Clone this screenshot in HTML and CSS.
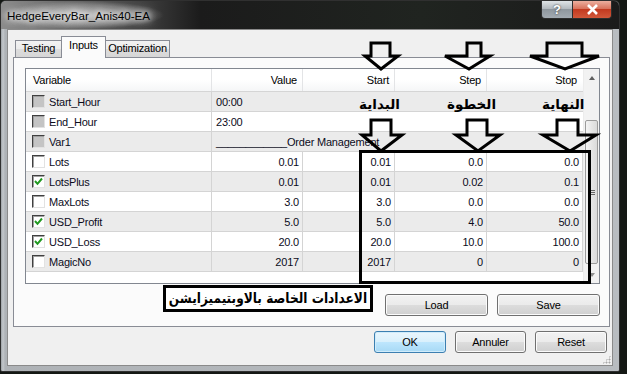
FILE: index.html
```html
<!doctype html>
<html lang="fr">
	<head>
		<meta charset="UTF-8" />
		<title>HedgeEveryBar_Anis40-EA</title>
		<link rel="stylesheet" href="styles.css">
	</head>
	<body>
		<div class="window">
			<div class="titlebar">
				<span class="title">HedgeEveryBar_Anis40-EA</span>
				<div class="caption-buttons">
					<span class="cap-btn help">?</span>
					<span class="cap-btn close">
						<svg width="13" height="11" viewBox="0 0 13 11">
							<path d="M2 1 L11 10 M11 1 L2 10" stroke="#fff" stroke-width="2.6" fill="none" />
						</svg>
					</span>
				</div>
			</div>

			<div class="client">
				<div class="tabs">
					<span class="tab">Testing</span>
					<span class="tab active">Inputs</span>
					<span class="tab">Optimization</span>
				</div>

				<div class="panel">
					<div class="list">
						<div class="rows">
							<div class="row head">
								<div class="cell name">Variable</div>
								<div class="cell">Value</div>
								<div class="cell">Start</div>
								<div class="cell">Step</div>
								<div class="cell">Stop</div>
							</div>
							<div class="row alt">
								<div class="cell name"><span class="check off"></span>Start_Hour</div>
								<div class="cell wide">00:00</div>
							</div>
							<div class="row">
								<div class="cell name"><span class="check off"></span>End_Hour</div>
								<div class="cell wide">23:00</div>
							</div>
							<div class="row alt">
								<div class="cell name"><span class="check off"></span>Var1</div>
								<div class="cell wide">____________Order Management</div>
							</div>
							<div class="row">
								<div class="cell name"><span class="check"></span>Lots</div>
								<div class="cell">0.01</div>
								<div class="cell">0.01</div>
								<div class="cell">0.0</div>
								<div class="cell">0.0</div>
							</div>
							<div class="row alt">
								<div class="cell name"><span class="check on"></span>LotsPlus</div>
								<div class="cell">0.01</div>
								<div class="cell">0.01</div>
								<div class="cell">0.02</div>
								<div class="cell">0.1</div>
							</div>
							<div class="row">
								<div class="cell name"><span class="check"></span>MaxLots</div>
								<div class="cell">3.0</div>
								<div class="cell">3.0</div>
								<div class="cell">0.0</div>
								<div class="cell">0.0</div>
							</div>
							<div class="row alt">
								<div class="cell name"><span class="check on"></span>USD_Profit</div>
								<div class="cell">5.0</div>
								<div class="cell">5.0</div>
								<div class="cell">4.0</div>
								<div class="cell">50.0</div>
							</div>
							<div class="row">
								<div class="cell name"><span class="check on"></span>USD_Loss</div>
								<div class="cell">20.0</div>
								<div class="cell">20.0</div>
								<div class="cell">10.0</div>
								<div class="cell">100.0</div>
							</div>
							<div class="row alt">
								<div class="cell name"><span class="check"></span>MagicNo</div>
								<div class="cell">2017</div>
								<div class="cell">2017</div>
								<div class="cell">0</div>
								<div class="cell">0</div>
							</div>
						</div>

						<div class="scrollbar">
							<span class="sb-btn"><span class="arrow-up"></span></span>
							<div class="track">
								<div class="thumb"><span class="grip-lines"></span></div>
							</div>
							<span class="sb-btn"><span class="arrow-down"></span></span>
						</div>
					</div>

					<div class="file-buttons">
						<button>Load</button>
						<button>Save</button>
					</div>
				</div>

				<div class="dialog-buttons">
					<button class="default">OK</button>
					<button>Annuler</button>
					<button>Reset</button>
				</div>
				<span class="size-grip"></span>
			</div>
		</div>

		<!-- annotations drawn over the dialog -->
		<div class="notes">
			<svg class="marks" width="627" height="374" viewBox="0 0 627 374">
				<g fill="none" stroke="#000" stroke-width="3" stroke-linejoin="miter">
					<polygon points="371,43 390,43 390,56 398,56 381,69 365,56 371,56" />
					<polygon points="467,43 481,43 481,56 490,56 469,69 445,56 467,56" />
					<polygon points="547,43 582,43 582,56 599,56 565,69 530,56 547,56" />
					<polygon points="371,120 391,120 391,135 402,135 381,151 362,135 371,135" />
					<polygon points="467,120 487,120 487,135 500,135 478,151 456,135 467,135" />
					<polygon points="557,120 578,120 578,135 596,135 570,151 543,135 557,135" />
					<rect x="360.5" y="151.5" width="229" height="131" />
				</g>
			</svg>
			<span class="note-label start">البداية</span>
			<span class="note-label step">الخطوة</span>
			<span class="note-label stop">النهاية</span>
			<div class="note-box"><span>الاعدادات الخاصة بالاوبتيميزايشن</span></div>
		</div>
	</body>
</html>
```

FILE: styles.css
```css
body {
	margin: 0;
	width: 627px;
	height: 374px;
	overflow: hidden;
	position: relative;
	background-color: #141814;
	font-family: "Liberation Sans", Arial, sans-serif;
	font-size: 11px;
	color: #000;
}
.window {
	width: 620px;
	height: 372px;
	box-sizing: border-box;
	border: 1px solid #303030;
	border-radius: 6px 6px 2px 2px;
	background: linear-gradient(90deg, #9da2a6, #c4c8cc 2px, #aeb2b6 4px, #b8bcc0 100%);
	display: flex;
	flex-direction: column;
	overflow: hidden;
}

/* title bar */
.titlebar {
	height: 28px;
	flex: none;
	display: flex;
	justify-content: space-between;
	background: linear-gradient(90deg, #8b8b8b 0, #6c6c6c 60px, #3a3a3a 150px, #1b1b1b 200px, #202420 420px, #1b1b1b 100%);
}
.title {
	padding: 8px 14px 0 6px;
	font-size: 11.6px;
	background: radial-gradient(closest-side, rgba(225, 225, 225, 0.75), rgba(200, 200, 200, 0.35) 70%, rgba(200, 200, 200, 0));
	text-shadow: 0 0 6px #fff, 0 0 10px #fff, 0 0 14px rgba(255, 255, 255, 0.8);
}
.caption-buttons {
	display: flex;
	margin-right: 7px;
	height: 18px;
}
.cap-btn {
	display: flex;
	align-items: center;
	justify-content: center;
	border: 1px solid #2e2e2e;
	border-top: none;
}
.help {
	width: 30px;
	border-radius: 0 0 0 4px;
	background: linear-gradient(#dfe3e6, #b4babf 45%, #8f979e 50%, #a3abb2);
	color: #fff;
	font-weight: bold;
	font-size: 13px;
	text-shadow: 0 0 2px #222;
}
.close {
	width: 38px;
	border-left: none;
	border-radius: 0 0 4px 0;
	background: linear-gradient(#ecaf9f, #d8735d 45%, #c23a20 50%, #d2583a);
}

/* client area */
.client {
	flex: 1;
	margin: 0 6px 5px;
	padding: 7px 2px 0 5px;
	border: 1px solid #8a8a8a;
	background-color: #f0f0f0;
	position: relative;
}
.tabs {
	display: flex;
	align-items: flex-end;
	height: 21px;
	padding-left: 2px;
	margin-bottom: -1px;
	position: relative;
	z-index: 1;
}
.tab {
	height: 15px;
	margin-bottom: 1px;
	padding-top: 1px;
	text-align: center;
	border: 1px solid #898c95;
	border-bottom: none;
	background: linear-gradient(#f2f2f2, #ebebeb 50%, #dddddd 50%, #d6d6d6);
	letter-spacing: -0.2px;
}
.tab:first-child {
	width: 45px;
}
.tab:last-child {
	width: 63px;
}
.tab.active {
	width: 43px;
	height: 19px;
	margin: 0 -1px;
	padding-top: 2px;
	background-color: #fbfbfb;
	background-image: none;
	position: relative;
}
.panel {
	height: 270px;
	box-sizing: border-box;
	padding: 10px 9px 10px 11px;
	border: 1px solid #898c95;
	background-color: #fbfbfb;
}

/* list view */
.list {
	display: flex;
	height: 216px;
	box-sizing: border-box;
	border: 1px solid #828790;
	background-color: #fff;
}
.rows {
	width: 557px;
}
.row {
	display: grid;
	grid-template-columns: 186px 91px 92px 92px 96px;
	height: 20px;
	box-sizing: border-box;
	border-bottom: 1px solid #d4d4d4;
	letter-spacing: -0.2px;
	color: #0c0c1c;
}
.row.alt {
	background-color: #ebebeb;
}
.cell {
	display: flex;
	align-items: center;
	justify-content: flex-end;
	padding: 0 3px 0 4px;
	border-right: 1px solid #d4d4d4;
	white-space: nowrap;
}
.cell.name {
	justify-content: flex-start;
	padding-left: 6px;
	gap: 4px;
}
.cell.wide {
	grid-column: span 4;
	justify-content: flex-start;
	border-right: none;
}
.row.head {
	height: 23px;
	background: linear-gradient(#fff, #fff 50%, #f5f6f7);
	border-bottom-color: #d5d5d5;
	color: #000;
}
.row.head .cell {
	border-right-color: #e3e4e6;
	padding-right: 5px;
}
.row.head .cell.name {
	padding-left: 7px;
}
.row.head .cell:last-child {
	padding-right: 6px;
	border-right: none;
}
.check {
	width: 13px;
	height: 13px;
	flex: none;
	box-sizing: border-box;
	border: 1px solid;
	border-color: #404040 #e2e2e2 #e2e2e2 #404040;
	box-shadow: inset 1px 1px #a0a0a0;
	background: #fff center no-repeat;
}
.check.off {
	background-color: #c4c4c4;
}
.check.on {
	background-image: url("data:image/svg+xml,%3Csvg xmlns='http://www.w3.org/2000/svg' width='11' height='11'%3E%3Cpath d='M2 5 L4.5 7.8 L9 2.5' stroke='%23219a21' stroke-width='2' fill='none'/%3E%3C/svg%3E");
}

/* scrollbar */
.scrollbar {
	width: 17px;
	display: flex;
	flex-direction: column;
	background-color: #f2f2f2;
	border-left: 1px solid #ececec;
	box-sizing: border-box;
}
.sb-btn {
	height: 17px;
	flex: none;
	display: flex;
	align-items: center;
	justify-content: center;
}
.arrow-up {
	border: 3.5px solid transparent;
	border-bottom: 4px solid #606060;
	border-top: none;
}
.arrow-down {
	border: 3.5px solid transparent;
	border-top: 4px solid #909090;
	border-bottom: none;
}
.track {
	flex: 1;
	padding-top: 34px;
}
.thumb {
	height: 144px;
	margin: 0 1px 0 1px;
	box-sizing: border-box;
	border: 1px solid #9b9b9b;
	border-radius: 2px;
	background: linear-gradient(90deg, #f4f4f4, #e6e6e6 50%, #dadada);
	display: flex;
	align-items: center;
	justify-content: center;
}
.grip-lines {
	width: 7px;
	height: 5px;
	background: linear-gradient(#666 1px, transparent 1px) 0 0 / 7px 2px;
}

/* buttons */
button {
	font-family: "Liberation Sans", Arial, sans-serif;
	font-size: 11px;
	letter-spacing: -0.2px;
	color: #000;
	height: 22px;
	padding: 0;
	border: 1px solid #707070;
	border-radius: 3px;
	background: linear-gradient(#f2f2f2, #ebebeb 50%, #dddddd 50%, #cfcfcf);
	box-shadow: inset 0 0 0 1px #fbfbfb;
}
button.default {
	border-color: #3c7fb1;
	background: linear-gradient(#eaf6fd, #d9f0fc 50%, #bee6fd 50%, #a7d9f5);
	box-shadow: inset 0 0 0 1px #d0ecfb;
}
.file-buttons {
	display: flex;
	justify-content: flex-end;
	gap: 9px;
	margin-top: 10px;
}
.file-buttons button {
	width: 103px;
}
.dialog-buttons {
	display: flex;
	justify-content: flex-end;
	gap: 9px;
	margin-top: 4px;
	padding-right: 3px;
}
.dialog-buttons button {
	width: 72px;
}
.dialog-buttons button:nth-child(2) {
	width: 71px;
}
.size-grip {
	position: absolute;
	right: 1px;
	bottom: 1px;
	width: 9px;
	height: 9px;
	background: radial-gradient(circle, #a8a8a8 0.8px, transparent 1.2px) 0 0 / 3px 3px;
	clip-path: polygon(100% 0, 100% 100%, 0 100%);
}

/* annotations */
.notes {
	position: absolute;
	top: 0;
	left: 0;
	width: 627px;
	height: 374px;
	pointer-events: none;
}
.marks {
	position: absolute;
	top: 0;
	left: 0;
}
.note-label {
	position: absolute;
	top: 96px;
	font-family: "DejaVu Sans", sans-serif;
	font-weight: bold;
	font-size: 13.5px;
	direction: rtl;
}
.note-label.start {
	left: 359px;
}
.note-label.step {
	left: 447px;
}
.note-label.stop {
	left: 542px;
}
.note-box {
	position: absolute;
	left: 163px;
	top: 285px;
	width: 210px;
	height: 27px;
	box-sizing: border-box;
	border: 3px solid #000;
	background-color: #fff;
	font-family: "DejaVu Sans", sans-serif;
	font-weight: bold;
	font-size: 14px;
	line-height: 20px;
	text-align: center;
	direction: rtl;
	white-space: nowrap;
	overflow: hidden;
}
.note-box span {
	display: inline-block;
	transform: scaleX(0.87);
	transform-origin: center;
	margin: 0 -20px;
}
```
